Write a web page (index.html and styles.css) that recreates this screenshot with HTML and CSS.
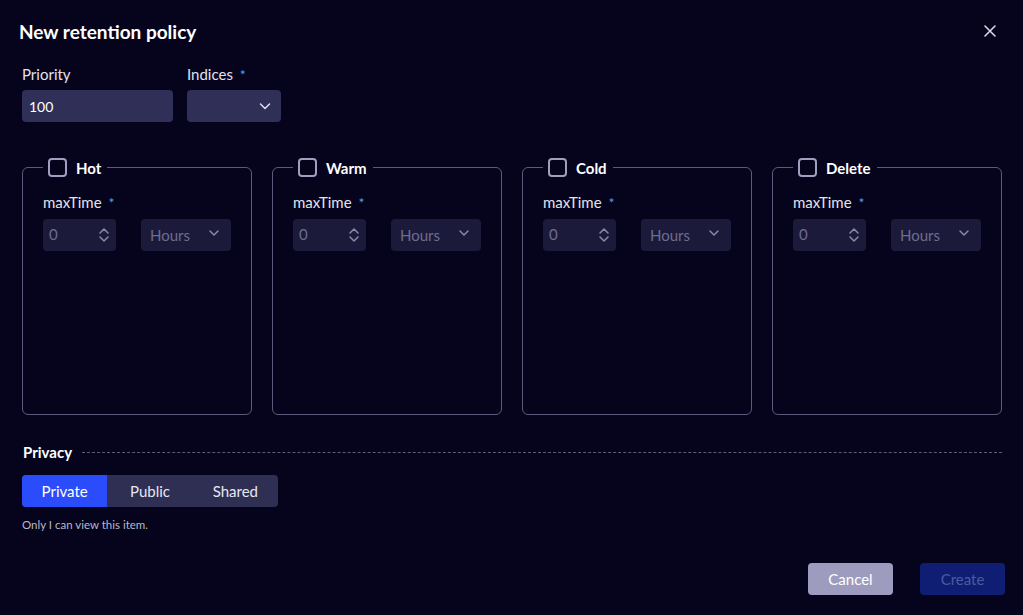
FILE: index.html
```html
<!DOCTYPE html>
<html>
<head>
<meta charset="utf-8">
<link rel="stylesheet" href="styles.css">
</head>
<body>
<div class="dialog">
  <header class="head">
    <h1 class="title">New retention policy</h1>
    <button class="close" aria-label="Close">
      <svg width="14" height="14" viewBox="0 0 14 14"><path d="M2 2L12 12M12 2L2 12" stroke="#d8d8ea" stroke-width="1.6" stroke-linecap="round"/></svg>
    </button>
  </header>

  <div class="toprow">
    <div class="field">
      <label class="lbl">Priority</label>
      <div class="input prio">100</div>
    </div>
    <div class="field">
      <label class="lbl">Indices <span class="req">*</span></label>
      <div class="input idx">
        <svg class="chev" width="14" height="14" viewBox="0 0 14 14"><path d="M2.5 5L7 9.5L11.5 5" fill="none" stroke="#d8d8ea" stroke-width="1.6" stroke-linecap="round" stroke-linejoin="round"/></svg>
      </div>
    </div>
  </div>

  <div class="phases">
    <fieldset class="phase">
      <legend class="leg"><span class="cb"></span><span>Hot</span></legend>
      <label class="lbl">maxTime <span class="req">*</span></label>
      <div class="mtrow">
        <div class="num"><span class="val">0</span><svg class="spin" width="12" height="16" viewBox="0 0 12 16"><path d="M2 6L6 2L10 6M2 10L6 14L10 10" fill="none" stroke="#8a8aa8" stroke-width="1.5" stroke-linecap="round" stroke-linejoin="round"/></svg></div>
        <div class="unit">Hours<svg class="uchev" width="12" height="12" viewBox="0 0 12 12"><path d="M2 4L6 8L10 4" fill="none" stroke="#8a8aa8" stroke-width="1.5" stroke-linecap="round" stroke-linejoin="round"/></svg></div>
      </div>
    </fieldset>
    <fieldset class="phase">
      <legend class="leg"><span class="cb"></span><span>Warm</span></legend>
      <label class="lbl">maxTime <span class="req">*</span></label>
      <div class="mtrow">
        <div class="num"><span class="val">0</span><svg class="spin" width="12" height="16" viewBox="0 0 12 16"><path d="M2 6L6 2L10 6M2 10L6 14L10 10" fill="none" stroke="#8a8aa8" stroke-width="1.5" stroke-linecap="round" stroke-linejoin="round"/></svg></div>
        <div class="unit">Hours<svg class="uchev" width="12" height="12" viewBox="0 0 12 12"><path d="M2 4L6 8L10 4" fill="none" stroke="#8a8aa8" stroke-width="1.5" stroke-linecap="round" stroke-linejoin="round"/></svg></div>
      </div>
    </fieldset>
    <fieldset class="phase">
      <legend class="leg"><span class="cb"></span><span>Cold</span></legend>
      <label class="lbl">maxTime <span class="req">*</span></label>
      <div class="mtrow">
        <div class="num"><span class="val">0</span><svg class="spin" width="12" height="16" viewBox="0 0 12 16"><path d="M2 6L6 2L10 6M2 10L6 14L10 10" fill="none" stroke="#8a8aa8" stroke-width="1.5" stroke-linecap="round" stroke-linejoin="round"/></svg></div>
        <div class="unit">Hours<svg class="uchev" width="12" height="12" viewBox="0 0 12 12"><path d="M2 4L6 8L10 4" fill="none" stroke="#8a8aa8" stroke-width="1.5" stroke-linecap="round" stroke-linejoin="round"/></svg></div>
      </div>
    </fieldset>
    <fieldset class="phase">
      <legend class="leg"><span class="cb"></span><span>Delete</span></legend>
      <label class="lbl">maxTime <span class="req">*</span></label>
      <div class="mtrow">
        <div class="num"><span class="val">0</span><svg class="spin" width="12" height="16" viewBox="0 0 12 16"><path d="M2 6L6 2L10 6M2 10L6 14L10 10" fill="none" stroke="#8a8aa8" stroke-width="1.5" stroke-linecap="round" stroke-linejoin="round"/></svg></div>
        <div class="unit">Hours<svg class="uchev" width="12" height="12" viewBox="0 0 12 12"><path d="M2 4L6 8L10 4" fill="none" stroke="#8a8aa8" stroke-width="1.5" stroke-linecap="round" stroke-linejoin="round"/></svg></div>
      </div>
    </fieldset>
  </div>

  <div class="privhead">
    <span class="privtitle">Privacy</span>
    <span class="dash"></span>
  </div>
  <div class="seg">
    <button class="segbtn active">Private</button>
    <button class="segbtn">Public</button>
    <button class="segbtn">Shared</button>
  </div>
  <p class="help">Only I can view this item.</p>

  <footer class="foot">
    <button class="btn cancel">Cancel</button>
    <button class="btn create">Create</button>
  </footer>
</div>
</body>
</html>
```
FILE: styles.css
```css
* { box-sizing: border-box; }
html, body { margin: 0; padding: 0; }
body {
  background: #05041c;
  color: #e6e6f2;
  font-family: Lato, "Open Sans", sans-serif;
  width: 1023px;
  height: 615px;
  overflow: hidden;
}
.dialog {
  padding: 0 21px 0 22px;
  display: flex;
  flex-direction: column;
}
.head {
  display: flex;
  justify-content: space-between;
  align-items: center;
  height: 62px;
  margin-left: -3px;
}
.title {
  margin: 0;
  font-size: 19px;
  font-weight: 700;
  color: #ffffff;
}
.close {
  background: none;
  border: 0;
  padding: 0;
  margin-right: 5px;
  width: 14px;
  height: 14px;
  display: flex;
}
.toprow {
  display: flex;
  gap: 14px;
  margin-top: 4px;
}
.field { display: flex; flex-direction: column; }
.lbl {
  font-size: 15px;
  color: #e2e2ee;
  height: 16px;
  line-height: 16px;
  margin-bottom: 8px;
}
.req { color: #4aa3e8; margin-left: 3px; font-size: 14px; }
.input {
  height: 32px;
  background: #302f57;
  border-radius: 4px;
  font-size: 14px;
  color: #ffffff;
  display: flex;
  align-items: center;
  padding: 0 8px;
}
.prio { width: 151px; padding-left: 7px; }
.idx { width: 94px; justify-content: flex-end; padding-right: 9px; }
.phases {
  display: grid;
  grid-template-columns: repeat(4, 230px);
  column-gap: 20px;
  margin-top: 36px;
}
.phase {
  margin: 0;
  border: 1px solid #5c5b7d;
  border-radius: 6px;
  height: 257px;
  padding: 17px 20px 0 20px;
  display: flex;
  flex-direction: column;
}
.leg {
  padding: 0 6px 0 5px;
  margin-left: 0;
  display: flex;
  align-items: center;
  gap: 9px;
  font-size: 15px;
  font-weight: 700;
  color: #ffffff;
}
.cb {
  width: 19px;
  height: 19px;
  border: 2px solid #a09fbf;
  border-radius: 4px;
  display: inline-block;
}
.phase .lbl { margin-bottom: 9px; margin-top: 0; }
.mtrow { display: flex; gap: 25px; }
.num, .unit {
  height: 32px;
  background: #1b1a3a;
  border-radius: 4px;
  color: #6e6d8e;
  font-size: 15px;
  display: flex;
  align-items: center;
  justify-content: space-between;
}
.num { width: 73px; padding: 0 6px 0 6px; }
.val { margin-top: -3px; }
.unit { width: 90px; padding: 0 11px 0 9px; }
.uchev { margin-top: -4px; }
.privhead {
  display: flex;
  align-items: center;
  gap: 8px;
  margin-top: 29px;
  margin-left: 1px;
  height: 16px;
}
.privtitle { font-size: 15px; font-weight: 700; color: #ffffff; }
.dash { flex: 1; border-top: 1px dashed #5c5b7d; margin-left: 2px; }
.seg {
  display: flex;
  margin-top: 15px;
  width: 256px;
  height: 32px;
  background: #2f2e53;
  border-radius: 4px;
  overflow: hidden;
}
.segbtn {
  flex: 1;
  border: 0;
  background: transparent;
  color: #e6e6f2;
  font-family: inherit;
  font-size: 15px;
  padding: 0;
}
.segbtn.active { background: #2b4cfa; color: #ffffff; }
.help {
  margin: 11px 0 0 0;
  font-size: 11.5px;
  color: #b8b8cc;
}
.foot {
  display: flex;
  justify-content: flex-end;
  gap: 27px;
  margin-top: 32px;
  margin-right: -3px;
}
.btn {
  width: 85px;
  height: 32px;
  border: 0;
  border-radius: 4px;
  font-family: inherit;
  font-size: 15px;
}
.cancel { background: #9d9cbf; color: #ffffff; }
.create { background: #0f1e73; color: #4d5aa0; }
```
